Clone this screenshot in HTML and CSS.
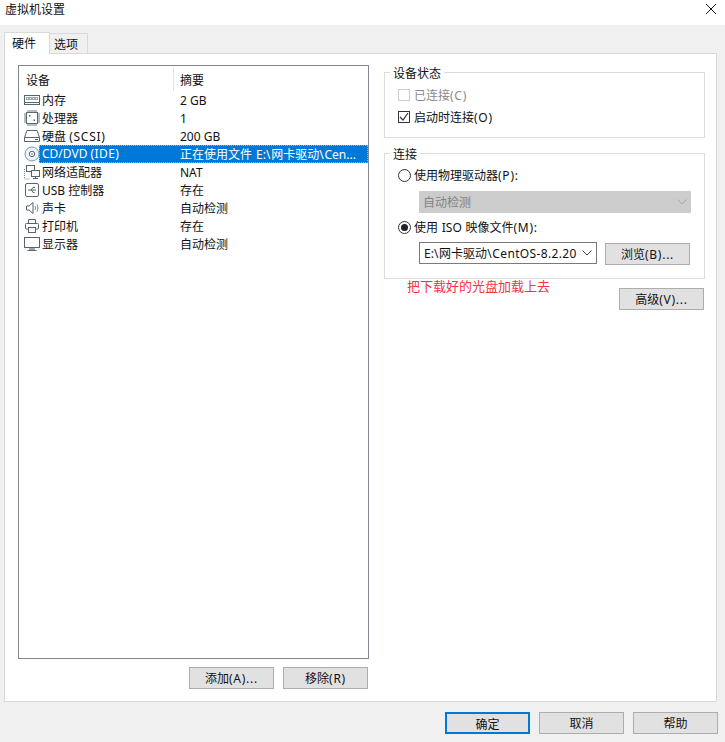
FILE: index.html
```html
<!DOCTYPE html>
<html lang="zh">
<head>
<meta charset="utf-8">
<title>虚拟机设置</title>
<link rel="stylesheet" href="styles.css">
</head>
<body>
<div class="window">
  <header class="titlebar">
    <span class="title">虚拟机设置</span>
    <svg class="close" width="10" height="10" viewBox="0 0 10 10"><path d="M0 0L10 10M10 0L0 10" stroke="#111" stroke-width="1" fill="none"/></svg>
  </header>
  <div class="tabs">
    <div class="tab active">硬件</div>
    <div class="tab">选项</div>
  </div>
  <main class="panel">
    <section class="left">
      <div class="list">
        <div class="list-head">
          <div class="col-a">设备</div>
          <div class="col-b">摘要</div>
        </div>
        <div class="row">
          <svg class="ico" viewBox="0 0 16 16"><rect x="0.5" y="3.500" width="15" height="9" fill="#fff" stroke="#56646f"/><rect x="2" y="5" width="12" height="3" fill="#9aa5ad"/><path d="M3 6.500h1M6 6.500h1M9 6.500h1M12 6.500h1" stroke="#fff"/><path d="M1 10.500h14" stroke="#56646f"/></svg>
          <span class="name">内存</span><span class="sum">2 GB</span>
        </div>
        <div class="row">
          <svg class="ico" viewBox="0 0 16 16"><rect x="2.500" y="2.500" width="11" height="11" fill="#fff" stroke="#56646f"/><path d="M4 0v2.500M6 0v2.500M8 0v2.500M10 0v2.500M12 0v2.500M4 13.500v2.500M6 13.500v2.500M8 13.500v2.500M10 13.500v2.500M12 13.500v2.500M0 4h2.500M0 6h2.500M0 8h2.500M0 10h2.500M0 12h2.500M13.500 4h2.500M13.500 6h2.500M13.500 8h2.500M13.500 10h2.500M13.500 12h2.500" stroke="#6f7c86"/><rect x="5" y="5" width="1.500" height="1.500" fill="#56646f"/><rect x="9.500" y="9.500" width="1.500" height="1.500" fill="#56646f"/></svg>
          <span class="name">处理器</span><span class="sum">1</span>
        </div>
        <div class="row">
          <svg class="ico" viewBox="0 0 16 16"><path d="M3 2.500h10l2.500 7v4h-15v-4z" fill="#fff" stroke="#56646f"/><path d="M.5 9.500h15" stroke="#56646f"/><path d="M11 11.500h3" stroke="#56646f"/></svg>
          <span class="name">硬盘 <span class="key">(SCSI)</span></span><span class="sum">200 GB</span>
        </div>
        <div class="row selected">
          <svg class="ico" viewBox="0 0 16 16"><circle cx="8" cy="8" r="7" fill="#eaf3fa" stroke="#6a9cc0"/><circle cx="8" cy="8" r="2.700" fill="#fff" stroke="#56646f"/><circle cx="8" cy="8" r="0.800" fill="#56646f"/></svg>
          <div class="sel-a"><span class="name">CD/DVD <span class="key-s">(IDE)</span></span></div>
          <span class="sum sum-file">正在使用文件 E:<span class="key">\</span>网卡驱动<span class="key">\</span>Cen...</span>
        </div>
        <div class="row">
          <svg class="ico" viewBox="0 0 16 16"><rect x="2.500" y="1.500" width="8" height="6" fill="#fff" stroke="#56646f"/><rect x="7.500" y="6.500" width="8" height="6" fill="#fff" stroke="#56646f"/><path d="M11.500 12.500v2M9 14.500h5" stroke="#56646f"/><path d="M.5 5v10h6" stroke="#7d8a94" stroke-dasharray="1 1" fill="none"/></svg>
          <span class="name">网络适配器</span><span class="sum">NAT</span>
        </div>
        <div class="row">
          <svg class="ico" viewBox="0 0 16 16"><rect x="1.500" y="1.500" width="13" height="13" rx="1.500" fill="#fff" stroke="#56646f"/><path d="M4 8h8M7 8l2-2.500h2M7.500 8l1.500 2.500h1.500" stroke="#56646f" fill="none"/></svg>
          <span class="name">USB 控制器</span><span class="sum">存在</span>
        </div>
        <div class="row">
          <svg class="ico" viewBox="0 0 16 16"><path d="M2.500 6h2.500l4-3.500v11l-4-3.500h-2.500z" fill="#fff" stroke="#56646f"/><path d="M11 6q1.500 2 0 4M13 4.500q2 3.500 0 7" stroke="#7d8a94" fill="none"/></svg>
          <span class="name">声卡</span><span class="sum">自动检测</span>
        </div>
        <div class="row">
          <svg class="ico" viewBox="0 0 16 16"><path d="M4.500 5.500v-4h7v4" fill="#fff" stroke="#56646f"/><rect x="1.500" y="5.500" width="13" height="5.500" rx="1" fill="#fff" stroke="#56646f"/><rect x="4.500" y="9.500" width="7" height="5" fill="#fff" stroke="#56646f"/></svg>
          <span class="name">打印机</span><span class="sum">存在</span>
        </div>
        <div class="row">
          <svg class="ico" viewBox="0 0 16 16"><rect x="0.500" y="1.500" width="15" height="10" fill="#fff" stroke="#56646f"/><path d="M5 12h6v2h-6z" fill="#9aa5ad"/><path d="M3.500 14.500h9" stroke="#56646f"/></svg>
          <span class="name">显示器</span><span class="sum">自动检测</span>
        </div>
      </div>
      <div class="list-actions">
        <button class="btn" type="button">添加<span class="key">(A)...</span></button>
        <button class="btn" type="button">移除<span class="key">(R)</span></button>
      </div>
    </section>
    <section class="right">
      <div class="group group-status">
        <span class="legend">设备状态</span>
        <label class="opt disabled"><span class="check"></span><span class="opt-text">已连接<span class="key">(C)</span></span></label>
        <label class="opt"><span class="check on"><svg width="10" height="10" viewBox="0 0 10 10"><path d="M1 5l3 3 5-7" stroke="#333" stroke-width="1.200" fill="none"/></svg></span><span class="opt-text">启动时连接<span class="key">(O)</span></span></label>
      </div>
      <div class="group group-conn">
        <span class="legend">连接</span>
        <label class="opt"><span class="radio"></span><span class="opt-text">使用物理驱动器<span class="key">(P):</span></span></label>
        <div class="select disabled-select">
          <span class="select-text">自动检测</span>
          <svg class="chev" width="10" height="6" viewBox="0 0 10 6"><path d="M.5 .5L5 5 9.500 .5" stroke="#a8a8a8" fill="none"/></svg>
        </div>
        <label class="opt opt-iso"><span class="radio on"></span><span class="opt-text iso-label">使用 ISO 映像文件<span class="key">(M):</span></span></label>
        <div class="iso-row">
          <div class="select iso-select">
            <span class="select-text">E:<span class="key">\</span>网卡驱动<span class="key">\</span><span class="iso-name">CentOS-8.2.2004</span></span>
            <svg class="chev" width="10" height="6" viewBox="0 0 10 6"><path d="M.5 .5L5 5 9.500 .5" stroke="#444" fill="none"/></svg>
          </div>
          <button class="btn" type="button">浏览<span class="key">(B)...</span></button>
        </div>
      </div>
      <div class="note-row">
        <span class="note">把下载好的光盘加载上去</span>
        <button class="btn" type="button">高级<span class="key">(V)...</span></button>
      </div>
    </section>
  </main>
  <footer class="footer">
    <button class="btn primary" type="button">确定</button>
    <button class="btn" type="button">取消</button>
    <button class="btn" type="button">帮助</button>
  </footer>
</div>
</body>
</html>
```
FILE: styles.css
```css
* { box-sizing: border-box; }
html, body { margin: 0; padding: 0; }
body {
  width: 725px;
  height: 742px;
  overflow: hidden;
  font-family: "Noto Sans", "Noto Sans CJK SC", sans-serif;
  font-size: 12px;
  line-height: 18px;
  color: #111;
  background: #f0f0f0;
}
.window { display: flex; flex-direction: column; height: 742px; }
.titlebar {
  height: 25px;
  background: #fff;
  display: flex;
  align-items: center;
  justify-content: space-between;
  padding: 0 9px 5px 5px;
}
.close { margin-bottom: 2px; }
.title { line-height: 18px; }
.key { letter-spacing: .75px; }
.key-s { letter-spacing: .4px; }
.iso-name { letter-spacing: .35px; }
.tabs { display: flex; align-items: flex-end; height: 28px; padding-left: 4px; }
.tab {
  width: 39px;
  height: 20px;
  border: 1px solid #d9d9d9;
  border-bottom: 0;
  background: #f0f0f0;
  padding-left: 4px;
  line-height: 22px;
  margin-left: -1px;
}
.tab.active {
  width: 46px;
  height: 22px;
  background: #fff;
  padding-left: 7px;
  margin-left: 0;
  margin-bottom: -1px;
  position: relative;
  z-index: 1;
}
.panel {
  width: 713px;
  height: 649px;
  margin-left: 4px;
  border: 1px solid #d9d9d9;
  background: #fff;
  display: flex;
  gap: 15px;
  padding: 11px 0 0 13px;
}
.left { width: 351px; }
.list {
  height: 594px;
  border: 1px solid #828790;
  background: #fff;
}
.list-head { height: 25px; display: flex; padding-top: 1px; }
.col-a { width: 155px; padding: 5px 0 0 7px; border-right: 1px solid #e5e5e5; }
.col-b { padding: 5px 0 0 6px; }
.row { height: 18px; display: flex; align-items: center; padding-left: 5px; position: relative; }
.ico { width: 16px; height: 16px; flex: none; }
.name { margin-left: 2px; width: 138px; flex: none; white-space: nowrap; padding-top: 2px; }
.sum { white-space: nowrap; padding-top: 2px; }
.sum-file { word-spacing: 1px; }
.selected { color: #fff; }
.selected .ico { position: relative; z-index: 1; }
.sel-a { width: 140px; flex: none; }
.selected::before {
  content: "";
  position: absolute;
  left: 20px; right: 0; top: 0; bottom: 0;
  background: #0078d7;
  border: 1px dotted #f7a23b;
}
.selected .sel-a, .selected .sum { position: relative; }
.list-actions { display: flex; justify-content: flex-end; gap: 9px; margin-top: 8px; padding-right: 1px; }
.btn {
  width: 85px;
  height: 22px;
  padding: 2px 0 0;
  border: 1px solid #adadad;
  background: #e1e1e1;
  font: inherit;
  line-height: 18px;
  color: #111;
}
.btn.primary { border: 2px solid #0078d7; }
.right { width: 321px; padding-top: 7px; }
.group { border: 1px solid #dcdcdc; position: relative; padding-left: 13px; }
.group-status { height: 66px; padding-top: 13px; }
.group-conn { height: 126px; margin-top: 15px; padding-top: 12px; }
.legend {
  position: absolute;
  top: -8px;
  left: 5px;
  padding: 0 3px;
  background: #fff;
}
.opt { display: flex; align-items: center; gap: 4px; height: 18px; }
.opt + .opt { margin-top: 4px; }
.opt-text { padding-top: 2px; }
.opt.disabled { color: #8a8a8a; }
.iso-label { word-spacing: .6px; }
.check {
  width: 12px; height: 12px;
  border: 1px solid #333;
  display: flex; align-items: center; justify-content: center;
  flex: none;
}
.opt.disabled .check { border-color: #ccc; }
.radio {
  width: 13px; height: 13px;
  border: 1px solid #333;
  border-radius: 50%;
  flex: none;
  display: flex; align-items: center; justify-content: center;
  margin-right: -1px;
}
.radio.on::after {
  content: "";
  width: 7px; height: 7px;
  border-radius: 50%;
  background: #222;
}
.select {
  height: 22px;
  display: flex;
  align-items: center;
  justify-content: space-between;
  padding: 0 4px;
}
.select-text { white-space: nowrap; overflow: hidden; padding-top: 2px; }
.chev { flex: none; margin-left: 5px; }
.disabled-select {
  width: 272px;
  margin: 7px 0 0 21px;
  background: #ccc;
  color: #838383;
}
.opt-iso { margin-top: 5px; }
.iso-row { display: flex; align-items: flex-start; gap: 8px; margin: 6px 0 0 21px; }
.iso-select { width: 178px; border: 1px solid #7a7a7a; background: #fff; }
.iso-row .btn { margin-top: 1px; }
.note-row { display: flex; justify-content: space-between; padding: 0 1px 0 23px; }
.note { color: #f5333f; font-size: 13px; line-height: 16px; margin-top: -1px; }
.note-row .btn { margin-top: 9px; }
.footer { display: flex; justify-content: flex-end; gap: 9px; padding: 10px 7px 0 0; }
```
